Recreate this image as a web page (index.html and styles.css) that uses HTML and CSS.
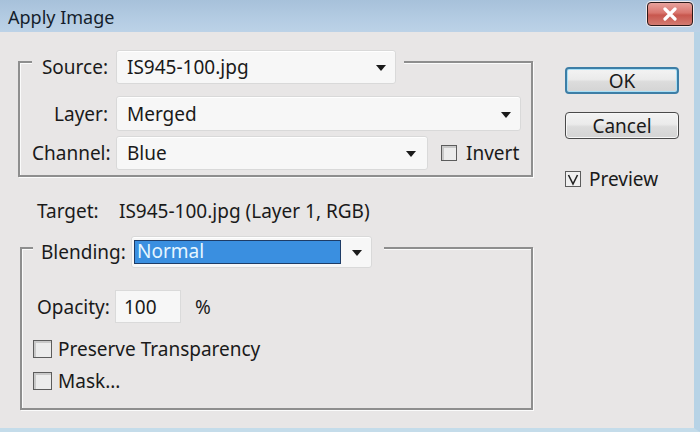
FILE: index.html
```html
<!DOCTYPE html>
<html>
<head>
<meta charset="utf-8">
<link rel="stylesheet" href="styles.css">
</head>
<body>
<div class="window">
  <div class="titlebar">
    <span class="title">Apply Image</span>
    <span class="close"><svg width="22" height="14" viewBox="0 0 22 14"><path d="M6 2 L16 12 M16 2 L6 12" stroke="#fff" stroke-width="3.2" stroke-linecap="round"/></svg></span>
  </div>
  <div class="content">
    <div class="left">
      <div class="group group1">
        <div class="head head1">
          <span class="label">Source:</span>
          <div class="select w-source"><span>IS945-100.jpg</span><i class="arrow"></i></div>
        </div>
        <div class="row row-layer">
          <span class="label">Layer:</span>
          <div class="select w-layer"><span>Merged</span><i class="arrow"></i></div>
        </div>
        <div class="row row-channel">
          <span class="label">Channel:</span>
          <div class="select w-channel"><span>Blue</span><i class="arrow"></i></div>
          <span class="check invert-check"></span>
          <span class="check-text">Invert</span>
        </div>
      </div>

      <div class="target">
        <span class="target-label">Target:</span>
        <span class="target-value">IS945-100.jpg (Layer 1, RGB)</span>
      </div>

      <div class="group group2">
        <div class="head head2">
          <span class="blend-label">Blending:</span>
          <div class="select w-blend"><span class="selected">Normal</span><i class="arrow"></i></div>
        </div>
        <div class="row row-opacity">
          <span class="opacity-label">Opacity:</span>
          <div class="input">100</div>
          <span class="pct">%</span>
        </div>
        <div class="row check-row row-preserve">
          <span class="check big"></span>
          <span class="check-text">Preserve Transparency</span>
        </div>
        <div class="row check-row row-mask">
          <span class="check big"></span>
          <span class="check-text">Mask...</span>
        </div>
      </div>
    </div>

    <div class="right">
      <div class="btn btn-ok">OK</div>
      <div class="btn btn-cancel">Cancel</div>
      <div class="preview">
        <span class="check checked"><svg width="14" height="14" viewBox="0 0 14 14"><path d="M2.5 3 L7 12 L11.5 3" fill="none" stroke="#222" stroke-width="1.6"/></svg></span>
        <span class="check-text">Preview</span>
      </div>
    </div>
  </div>
</div>
</body>
</html>
```

FILE: styles.css
```css
* { box-sizing: border-box; }
html, body { margin: 0; padding: 0; }
body {
  width: 700px;
  height: 432px;
  overflow: hidden;
  font-family: "Noto Sans", "DejaVu Sans", sans-serif;
  font-size: 19px;
  color: #1a1a1a;
  background: #e8e6e6;
}
.window {
  width: 700px;
  height: 432px;
  border-right: 6px solid #b7d3e6;
  border-bottom: 4px solid #c4dcea;
  background: #e8e6e6;
  display: flex;
  flex-direction: column;
}
.titlebar {
  height: 32px;
  flex: none;
  background: linear-gradient(to bottom, #a7c1da 0%, #b4cce3 60%, #bcd2e7 100%);
  display: flex;
  align-items: center;
  justify-content: space-between;
  padding: 0 0 0 8px;
  margin-right: -6px;
}
.title {
  font-family: "Noto Sans", "DejaVu Sans", sans-serif;
  font-size: 18px;
  color: #141e2c;
  margin-top: 2px;
}
.close {
  width: 46px;
  height: 24px;
  margin-right: 7px;
  margin-top: -5px;
  border: 1.5px solid #2b1a1a;
  border-radius: 4px;
  background: linear-gradient(to bottom, #e8a29c 0%, #d9766e 45%, #c8574e 55%, #d37a70 100%);
  box-shadow: 0 0 0 1px #f4e9ea;
  display: flex;
  align-items: center;
  justify-content: center;
}
.content {
  flex: 1;
  display: flex;
}
.left {
  width: 534px;
  padding-left: 18px;
  padding-top: 29px;
}
.group {
  border: 2px solid #8e8e8e;
  box-shadow: inset 1px 1px 0 #fbfbfb, 1px 1px 0 #fbfbfb;
}
.group1 {
  width: 515px;
  height: 116px;
  padding-left: 12px;
}
.head {
  display: flex;
  align-items: center;
  background: #e8e6e6;
  width: fit-content;
}
.head1 {
  margin-top: -13px;
  padding-right: 8px;
  height: 34px;
}
.row {
  display: flex;
  align-items: center;
}
.label {
  width: 76px;
  text-align: right;
  margin-right: 8px;
  white-space: nowrap;
}
.select {
  height: 34px;
  background: #f7f7f7;
  border: 1px solid #d9d9d9;
  border-radius: 3px;
  box-shadow: inset 0 1px 0 #ffffff;
  display: flex;
  align-items: center;
  justify-content: space-between;
  padding-left: 10px;
  padding-right: 9px;
}
.arrow {
  display: block;
  width: 0;
  height: 0;
  border-left: 5px solid transparent;
  border-right: 5px solid transparent;
  border-top: 6px solid #1a1a1a;
  margin-top: 2px;
}
.w-source { width: 280px; }
.row-layer { margin-top: 12px; }
.w-layer { width: 405px; height: 35px; }
.row-channel { margin-top: 5px; }
.w-channel { width: 312px; padding-right: 11px; }
.check {
  display: inline-block;
  width: 16px;
  height: 16px;
  border: 1px solid #5c5c5c;
  background: #ececec;
  box-shadow: inset 2px 2px 0 #c9c9c9;
  flex: none;
}
.invert-check { margin-left: 13px; }
.check-text { margin-left: 9px; white-space: nowrap; }

.target {
  display: flex;
  align-items: center;
  height: 24px;
  margin-top: 22px;
  padding-left: 19px;
}
.target-label { width: 82px; flex: none; }
.target-value { white-space: nowrap; }

.group2 {
  margin-top: 24px;
  margin-left: 2px;
  width: 513px;
  height: 163px;
  padding-left: 11px;
}
.head2 {
  margin-top: -13px;
  margin-left: 0;
  height: 32px;
  padding-right: 12px;
}
.blend-label {
  width: 82px;
  margin-left: 8px;
  margin-right: 8px;
  white-space: nowrap;
}
.w-blend {
  width: 241px;
  height: 32px;
  padding-left: 2px;
  padding-right: 9px;
}
.selected {
  display: block;
  width: 207px;
  height: 24px;
  line-height: 21px;
  background: #3a8fe0;
  border: 1.5px solid #1e3c66;
  color: #e6f6ff;
  padding-left: 2px;
}
.row-opacity {
  margin-top: 22px;
  padding-left: 4px;
}
.opacity-label { width: 78px; white-space: nowrap; }
.input {
  width: 66px;
  height: 33px;
  background: #f7f7f7;
  border: 1px solid #dadada;
  padding-left: 8px;
  display: flex;
  align-items: center;
}
.pct { margin-left: 14px; }
.check.big { width: 19px; height: 18px; }
.row-preserve { margin-top: 13px; }
.row-mask { margin-top: 6px; }
.check-row .check-text { margin-left: 6px; }

.right {
  padding-left: 31px;
  padding-top: 35px;
  display: flex;
  flex-direction: column;
}
.btn {
  width: 114px;
  height: 27px;
  border-radius: 4px;
  display: flex;
  align-items: center;
  justify-content: center;
  background: linear-gradient(to bottom, #f3f3f3 0%, #ebebeb 45%, #dcdcdc 55%, #d4d4d4 100%);
  font-size: 19px;
}
.btn-ok {
  border: 2px solid #3d7ea6;
  box-shadow: inset 0 0 0 1px #a8e0f7;
}
.btn-cancel {
  margin-top: 18px;
  border: 1.5px solid #4a4a4a;
  box-shadow: inset 0 0 0 1px #f7f7f7;
}
.preview {
  display: flex;
  align-items: center;
  margin-top: 27px;
}
.check.checked {
  display: flex;
  align-items: center;
  justify-content: center;
  box-shadow: none;
  background: #f0f0f0;
}
.preview .check-text { margin-left: 8px; }
```
